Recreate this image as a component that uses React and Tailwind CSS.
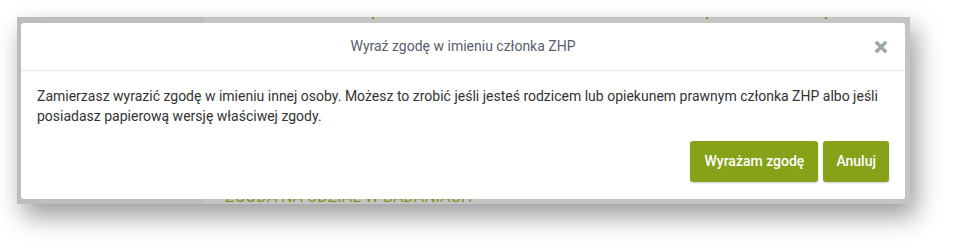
export default function App() {
  return (
    <div className="w-[959px] h-[252px] bg-white pt-[17px] pl-[17px] font-['Roboto',sans-serif]">
      {/* Screenshot frame with dimmed page behind the modal */}
      <div className="relative w-[893px] h-[187px] flex overflow-hidden shadow-[6px_12px_24px_rgba(0,0,0,0.4)]">
        <div className="w-[186px] bg-[#bdbdbd]" />
        <div className="flex-1 bg-[#c4c4c4] flex flex-col justify-between">
          <div className="relative h-[3px]">
            <span className="absolute left-[169px] top-0 w-[2px] h-[2px] bg-[#7d8f24]" />
            <span className="absolute left-[503px] top-0 w-[2px] h-[2px] bg-[#7d8f24]" />
            <span className="absolute left-[622px] top-0 w-[2px] h-[2px] bg-[#7d8f24]" />
          </div>
          <div className="pl-[22px] h-[12px] overflow-hidden">
            <p className="text-[16px] leading-[16px] mt-[-3px] text-[#7f9420] whitespace-nowrap">
              ZGODA NA UDZIAŁ W BADANIACH
            </p>
          </div>
        </div>

        {/* Modal */}
        <div className="absolute left-[4px] top-[6px] w-[884px] h-[176px] bg-white rounded-[3px] flex flex-col">
          <div className="relative h-[48px] flex items-center justify-center border-b border-[#e5e5e5]">
            <h3 className="text-[14px] text-[#56606b]">Wyraź zgodę w imieniu członka ZHP</h3>
            <button className="absolute right-[18px] top-[18px] text-[#9ea8b0]">
              <svg width="12" height="12" viewBox="0 0 12 12">
                <path d="M2 2 L10 10 M10 2 L2 10" stroke="currentColor" strokeWidth="3.6" strokeLinecap="square" />
              </svg>
            </button>
          </div>
          <div className="px-[16px] pt-[15px] pb-[15px] text-[14px] leading-[20px] text-[#333]">
            Zamierzasz wyrazić zgodę w imieniu innej osoby. Możesz to zrobić jeśli jesteś rodzicem lub opiekunem prawnym członka ZHP albo jeśli posiadasz papierową wersję właściwej zgody.
          </div>
          <div className="flex justify-end gap-[5px] pr-[16px]">
            <button className="h-[41px] px-[14px] rounded-[3px] bg-[#86a219] text-white text-[14px] font-medium shadow-[0_1px_2px_rgba(0,0,0,0.2)]">
              Wyrażam zgodę
            </button>
            <button className="h-[41px] px-[13px] rounded-[3px] bg-[#86a219] text-white text-[14px] font-medium shadow-[0_1px_2px_rgba(0,0,0,0.2)]">
              Anuluj
            </button>
          </div>
        </div>
      </div>
    </div>
  );
}
